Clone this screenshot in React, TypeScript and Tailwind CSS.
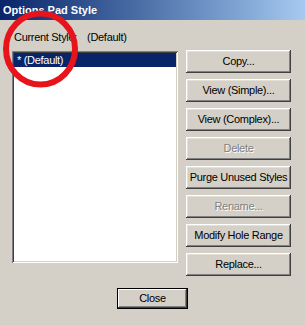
import React from 'react';

const btnBase =
  'h-[23px] w-[105px] flex items-center justify-center bg-[#d4d0c8] shadow-[inset_-1px_-1px_#404040,inset_1px_1px_#ffffff,inset_-2px_-2px_#808080,inset_2px_2px_#e4e0d8]';

function WinButton({ label, disabled }: { label: string; disabled?: boolean }) {
  return (
    <div className={btnBase}>
      {disabled ? (
        <span className="text-[#808080] [text-shadow:1px_1px_0_#ffffff]">{label}</span>
      ) : (
        <span className="text-black">{label}</span>
      )}
    </div>
  );
}

export default function App() {
  const buttons = [
    { label: 'Copy...' },
    { label: 'View (Simple)...' },
    { label: 'View (Complex)...' },
    { label: 'Delete', disabled: true },
    { label: 'Purge Unused Styles' },
    { label: 'Rename...', disabled: true },
    { label: 'Modify Hole Range' },
    { label: 'Replace...' },
  ];

  return (
    <div className="relative w-[305px] h-[325px] overflow-hidden bg-[#d4d0c8] font-['Liberation_Sans',Arial,sans-serif] text-[11px] tracking-[-0.3px] text-black">
      {/* title bar */}
      <div className="h-[20px] flex items-center pl-[3px] bg-gradient-to-r from-[#0a246a] to-[#a6caf0]">
        <span className="font-bold text-white text-[11px] tracking-normal">Options Pad Style</span>
      </div>

      <div className="flex items-center h-[14px] mt-[10px] pl-[14px]">
        <span>Current Style:</span>
        <span className="ml-[10px]">(Default)</span>
      </div>

      <div className="flex mt-[6px] pl-[12px]">
        <div className="w-[166px] h-[212px] mt-[1px] bg-white shadow-[inset_1px_1px_#808080,inset_-1px_-1px_#ffffff,inset_2px_2px_#404040,inset_-2px_-2px_#d4d0c8] p-[2px]">
          <div className="h-[14px] bg-[#0a246a] text-white flex items-center pl-[3px]">* (Default)</div>
        </div>
        <div className="ml-[8px] flex flex-col gap-[6px]">
          {buttons.map((b) => (
            <WinButton key={b.label} label={b.label} disabled={b.disabled} />
          ))}
        </div>
      </div>

      <div className="flex justify-center mt-[12px]">
        <div className="border border-black">
          <div className="h-[19px] w-[69px] flex items-center justify-center bg-[#d4d0c8] shadow-[inset_-1px_-1px_#404040,inset_1px_1px_#ffffff,inset_-2px_-2px_#808080]">
            Close
          </div>
        </div>
      </div>

      {/* red annotation circle */}
      <svg className="absolute left-0 top-0 pointer-events-none" width="90" height="95">
        <ellipse cx="40.5" cy="49" rx="34.5" ry="35.5" fill="none" stroke="#e8141b" strokeWidth="6" />
      </svg>
    </div>
  );
}
